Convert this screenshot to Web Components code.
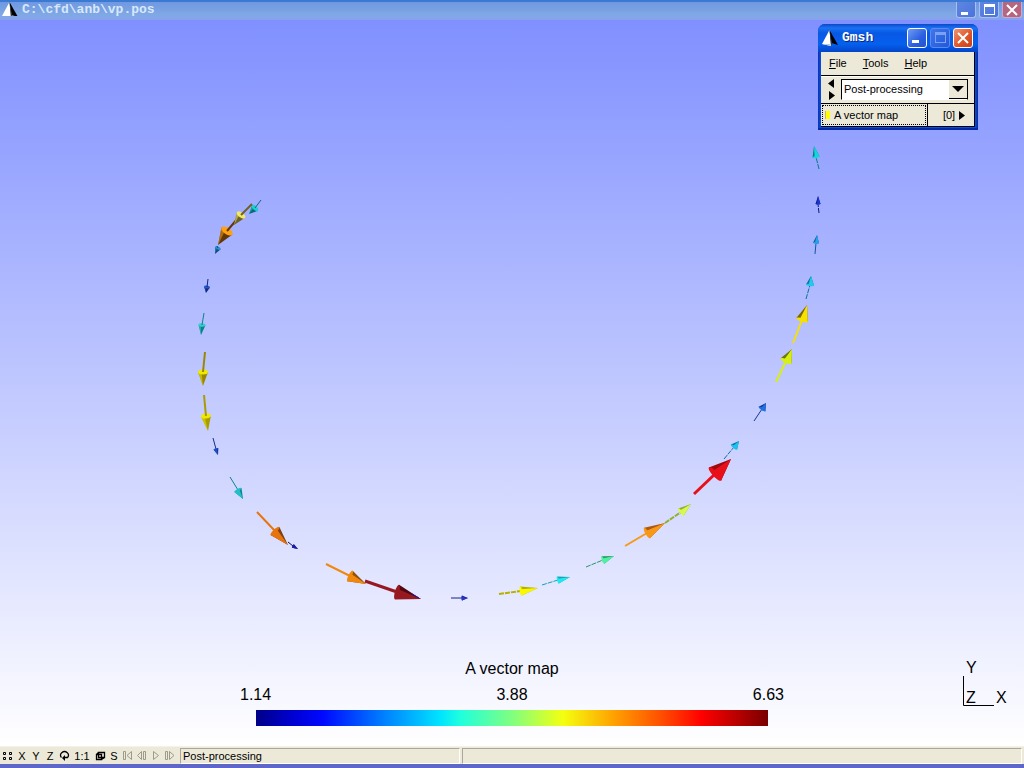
<!DOCTYPE html>
<html lang="en">
<head>
<meta charset="utf-8">
<title>C:\cfd\anb\vp.pos</title>
<style>
  html, body { margin: 0; height: 100%; }
  body { font: 11px/14px "Liberation Sans", Arial, sans-serif; color: #000; }
</style>
</head>
<body>
<gmsh-app></gmsh-app>
<script>
const define = (name, html, setup) => {
  const template = document.createElement('template');
  template.innerHTML = html;
  customElements.define(name, class extends HTMLElement {
    constructor() {
      super();
      this.attachShadow({ mode: 'open' }).append(template.content.cloneNode(true));
    }
    connectedCallback() { if (setup) setup(this, this.shadowRoot); }
  });
};

define('gmsh-logo', `
  <style>:host { display: block; flex: none; } svg { display: block; }</style>
  <svg width="16" height="16" viewBox="0 0 16 16" aria-hidden="true">
    <path d="M7.500 0 L0 14 L9 16 Z" fill="#fff"/>
    <path d="M7.500 0 L9.500 13 L16 15 Z" fill="#000"/>
    <path d="M7.500 0 L9 16 L10 13 Z" fill="#333"/>
    <path d="M0 14 L9 16 L9 14 Z" fill="#c8c8c8"/>
  </svg>`);

define('window-buttons', `
  <style>
    :host { display: flex; gap: 3px; flex: none; --size: 20px; }
    button {
      box-sizing: border-box; width: 20px; height: var(--size); padding: 0;
      border: 1px solid #fff; border-radius: 3px;
      background: linear-gradient(135deg, #6f9bf5, #2a5fe0 60%, #2454cc);
      display: grid; place-items: center;
    }
    svg { display: block; }
    .max { background: linear-gradient(135deg, #3f76ec, #2258da); border-color: #5b8af0; color: #7ba2f2; }
    .min, .close { color: #fff; }
    .close { background: linear-gradient(135deg, #f0936f, #dd5226 60%, #c8401c); }
    :host([faded]) button { border-color: #a9bdf0; border-top: 0; border-radius: 0 0 3px 3px; background: linear-gradient(135deg, #5f86e0, #4a74dc); color: #fff; }
    :host([faded]) .close { background: linear-gradient(135deg, #b06a84, #b8627a); border-color: #c8a8d8; }
  </style>
  <button class="min" aria-label="Minimize"><svg width="14" height="14"><path d="M2 9h7v3h-7z" fill="currentColor"/></svg></button>
  <button class="max" aria-label="Maximize"><svg width="14" height="14"><path d="M2 1h11v11h-11zM3 4v7h9v-7z" fill="currentColor" fill-rule="evenodd"/></svg></button>
  <button class="close" aria-label="Close"><svg width="14" height="14"><path d="M2 2L12 12M12 2L2 12" stroke="currentColor" stroke-width="2"/></svg></button>`);

define('main-title', `
  <style>
    :host {
      display: flex; box-sizing: border-box; height: 20px; padding: 0 2px; gap: 4px;
      border-top: 2px solid #3a7ad2;
      background: linear-gradient(#6f98e2, #7fa8e4 70%, #88a2ee);
    }
    h1 { flex: 1; margin: 0; font: bold 13px/16px "Liberation Mono", "Courier New", monospace; color: #d8e8fa; }
    window-buttons { height: 16px; }
    gmsh-logo { height: 14px; overflow: hidden; }
  </style>
  <gmsh-logo></gmsh-logo>
  <h1>C:\\cfd\\anb\\vp.pos</h1>
  <window-buttons faded style="--size:16px"></window-buttons>`);

define('vector-field', `
  <style>:host { display: block; height: 100%; } svg { display: block; width: 100%; height: 100%; }</style>
  <svg viewBox="0 20 1024 726" role="img" aria-label="Vector map"><g></g></svg>`,
  (host, root) => {
    // tail x,y, cone base x,y, tip x,y, cone width, light colour, dark colour, style
    // style: 1 = dashed shaft, 2 = cone seen from its lit base
    const arrows = [
      [261,200, 255,208, 249,214, 8, '#18d0d0', '#0c6878', 2],
      [238,218, 227,231, 218,245, 13, '#ffa010', '#603808', 2],
      [252,204, 241,215, 234,225, 10, '#f0e868', '#706028', 2],
      [217,246, 218,248, 215,254, 6, '#2890d0', '#104c80', 2],
      [208,279, 207,287, 206,293, 6, '#2858d0', '#102878', 2],
      [204,313, 202,325, 201,335, 7, '#30d0d0', '#108088', 2],
      [205,352, 203,372, 203,386, 10, '#f0e800', '#988800', 2],
      [204,395, 206,416, 208,431, 10, '#f0e800', '#a89c00', 2],
      [213,438, 216,449, 218,455, 5, '#2050c8', '#103090'],
      [230,477, 238,490, 243,499, 8, '#20c0c8', '#108090'],
      [257,512, 275,531, 288,545, 12, '#e87410', '#804010'],
      [288,542, 293,546, 298,549, 4, '#1820b0', '#101070'],
      [326,564, 350,576, 366,584, 12, '#f08810', '#905008'],
      [365,581, 397,592, 421,599, 15, '#981820', '#500810'],
      [451,598, 462,598, 468,598, 5, '#2838c8', '#182088'],
      [499,594, 521,591, 538,588, 9, '#f8f800', '#b8b000', 1],
      [542,585, 558,580, 570,577, 7, '#20e8f0', '#18a0b0', 1],
      [586,567, 603,560, 614,556, 8, '#50f0a0', '#289868', 1],
      [625,546, 647,533, 665,523, 12, '#f89818', '#b05810'],
      [665,523, 681,512, 691,504, 9, '#d8f850', '#90b030', 1],
      [694,494, 715,474, 731,459, 18, '#e81018', '#a00810'],
      [724,459, 734,447, 739,441, 8, '#20c0f0', '#1070a0', 1],
      [754,421, 762,409, 766,403, 8, '#2070e0', '#103898'],
      [776,382, 786,361, 792,349, 12, '#d8f010', '#687810'],
      [793,343, 802,320, 807,305, 12, '#f8e000', '#786800'],
      [806,299, 810,285, 811,276, 8, '#20c8f0', '#107090', 1],
      [815,254, 816,243, 817,235, 6, '#28a0f0', '#105898'],
      [819,213, 818,204, 818,196, 5, '#1838d8', '#101878', 1],
      [819,169, 816,157, 814,146, 7, '#10d8d8', '#087880', 1]
    ];
    root.querySelector('g').innerHTML = arrows.map(([tx, ty, bx, by, px, py, w, light, dark, style]) => {
      const length = Math.hypot(px - bx, py - by);
      const nx = -(py - by) / length * w / 2, ny = (px - bx) / length * w / 2;
      const angle = Math.atan2(py - by, px - bx) * 180 / Math.PI;
      const shaft = w > 14 ? 3 : w > 8 ? 2 : 1;
      const lit = style === 2;
      const shade = w > 11 && !lit ? light : dark;
      const edge = lit ? 0.3 : -0.4;
      const cone = `<path d="M${bx + nx} ${by + ny}L${px} ${py}L${bx - nx} ${by - ny}Z" fill="${dark}"/>
        <path d="M${bx + nx * edge} ${by + ny * edge}L${px} ${py}L${bx + nx} ${by + ny}Z" fill="${light}" opacity="${lit ? 0.5 : 1}"/>
        <ellipse cx="${bx}" cy="${by}" rx="${lit ? w / 4 : w / 7}" ry="${w / 2}" transform="rotate(${angle} ${bx} ${by})" fill="${light}"/>`;
      const line = `<path d="M${tx} ${ty}L${bx} ${by}" stroke="${shade}" stroke-width="${shaft}" ${style === 1 ? 'stroke-dasharray="5 1"' : ''}/>`;
      return lit ? cone + line : line + cone;
    }).join('') + '<path d="M412 594L419 598" stroke="#2018a0" stroke-width="1"/>';
  });

define('color-legend', `
  <style>
    :host { display: block; width: 50%; font-size: 16px; line-height: 18px; }
    figure, figcaption { margin: 0; }
    figcaption { text-align: center; }
    .values { display: grid; grid-template-columns: 1fr 1fr 1fr; margin: 8px -16px 6px; }
    .values span:nth-child(2) { text-align: center; }
    .values span:nth-child(3) { text-align: right; }
    .bar {
      height: 16px;
      background: linear-gradient(90deg, #000088, #0000d0 7%, #0008ff 13%, #0080ff 25%, #00e4ff 36%, #20ffdc 40%,
        #80ff80 50%, #f4ff10 60%, #ffa000 70%, #ff5000 79%, #ff0000 87%, #b80000 94%, #780000);
    }
  </style>
  <figure>
    <figcaption>A vector map</figcaption>
    <div class="values"><span>1.14</span><span>3.88</span><span>6.63</span></div>
    <div class="bar"></div>
  </figure>`);

define('axis-triad', `
  <style>:host { display: block; } svg { display: block; } text { font-size: 16px; }</style>
  <svg width="48" height="50" viewBox="960 658 48 50" role="img" aria-label="Axes">
    <path d="M963.5 676V705.5H994" fill="none" stroke="#000"/>
    <text x="966" y="673">Y</text><text x="966" y="703">Z</text><text x="996" y="703">X</text>
  </svg>`);

define('tool-window', `
  <style>
    :host {
      display: block; box-sizing: border-box; width: 160px; padding: 0 3px 3px;
      border-radius: 7px 7px 0 0;
      background: linear-gradient(90deg, #0831b8, #0b50dc 3px, #0b50dc calc(100% - 3px), #0428a0);
      box-shadow: inset 0 -2px #0428a8;
    }
    header {
      display: flex; align-items: center; box-sizing: border-box; height: 28px; gap: 4px;
      margin: 0 -3px; padding: 0 5px 0 4px; border-radius: 7px 7px 0 0;
      background: linear-gradient(#0a48c8, #1a72f4 4px, #0858e4 9px, #0560ee 20px, #0344c8);
    }
    h2 { flex: 1; margin: 0; font: bold 13px/16px "Liberation Mono", "Courier New", monospace; color: #fff; text-shadow: 1px 1px #0a2a80; }
    .body { background: #ece9d8; border: solid #000; border-width: 0 1px 1px 0; }
  </style>
  <header><gmsh-logo></gmsh-logo><h2><slot name="title"></slot></h2><window-buttons></window-buttons></header>
  <div class="body"><slot></slot></div>`);

define('menu-bar', `
  <style>
    :host { display: flex; box-sizing: border-box; height: 24px; padding: 0 4px 2px; align-items: center; border-bottom: 1px solid #000; }
    button { font: inherit; color: inherit; border: 0; padding: 0; background: none; }
    nav { display: flex; gap: 16px; padding-left: 4px; }
  </style>
  <nav>
    <button><u>F</u>ile</button><button><u>T</u>ools</button><button><u>H</u>elp</button>
  </nav>`);

define('module-picker', `
  <style>
    :host { display: flex; box-sizing: border-box; height: 28px; padding: 0 6px; align-items: center; gap: 6px; border-bottom: 1px solid #000; box-shadow: inset 0 1px #fff; }
    .history { display: grid; gap: 3px; }
    button { display: block; border: 0; padding: 0; background: none; width: 8px; height: 9px; }
    svg { display: block; }
    .combo { flex: 1; display: grid; box-sizing: border-box; height: 21px; border: 1px solid #000; border-bottom-color: #fff; background: #fff; }
    .combo > * { grid-area: 1 / 1; }
    select { appearance: none; font: inherit; color: inherit; border: 0; padding: 0 0 1px 2px; margin: 0; background: none; min-width: 0; outline: 0; }
    .arrow { justify-self: end; display: grid; place-items: center; width: 18px; box-sizing: border-box; background: #ece9d8; border-bottom: 1px solid #000; pointer-events: none; }
  </style>
  <div class="history">
    <button aria-label="Back"><svg width="8" height="9"><path d="M7 0V9L1 4.500Z"/></svg></button>
    <button aria-label="Forward"><svg width="8" height="9"><path d="M2 0V9L8 4.500Z"/></svg></button>
  </div>
  <div class="combo">
    <select aria-label="Module"><option>Post-processing</option></select>
    <span class="arrow"><svg width="12" height="6"><path d="M0 0H12L6 6Z"/></svg></span>
  </div>`);

define('view-row', `
  <style>
    :host { display: flex; height: 22px; }
    label { flex: 1; display: flex; align-items: center; gap: 4px; margin: 1px; padding-left: 2px; border: 1px dotted #000; }
    input { appearance: none; width: 5px; height: 8px; margin: 0; background: #ff0; border-left: 1px solid #c8b860; }
    button { width: 47px; font: inherit; color: inherit; border: 0; border-left: 1px solid #000; padding: 0 0 0 6px; background: none; display: flex; align-items: center; justify-content: center; gap: 4px; }
  </style>
  <label><input type="checkbox" checked><slot></slot></label>
  <button><span>[0]</span><svg width="6" height="9" aria-hidden="true"><path d="M0 0V9L6 4.500Z"/></svg></button>`);

define('status-bar', `
  <style>
    :host {
      display: flex; box-sizing: border-box; height: 22px; padding: 0 2px 0 1px; background: #ece9d8;
      border-bottom: 4px solid #5e66c8; border-top: 1px solid #f4f2e8;
    }
    button { width: 14px; padding: 0; border: 0; background: none; font: inherit; color: #000; display: grid; place-items: center; flex: none; }
    .wide { width: 22px; }
    .off { color: #9c9a8c; }
    svg { display: block; fill: none; stroke: currentColor; }
    .fields { flex: 1; display: grid; grid-template-columns: 1fr 2fr; gap: 2px; margin: 1px 0 0 3px; }
    output { box-sizing: border-box; padding-left: 2px; border: 1px solid #aca899; border-right-color: #fff; border-bottom-color: #fff; line-height: 14px; }
  </style>
  <button aria-label="Options"><svg width="12" height="10"><path d="M1.500 1.500h2v2h-2zM7.500 1.500h2v2h-2zM1.500 6.500h2v2h-2zM7.500 6.500h2v2h-2z"/></svg></button>
  <button>X</button><button>Y</button><button>Z</button>
  <button aria-label="Rotate"><svg width="11" height="11"><path d="M2.500 7.500A4 3.500 0 1 1 8.500 7.500H5" stroke-width="1.300"/><path d="M6 5v6L3 8z" fill="currentColor" stroke="none"/></svg></button>
  <button class="wide">1:1</button>
  <button aria-label="Perspective"><svg width="11" height="10"><path d="M1.500 3.500h5v5h-5zM3.500 1.500h6v5h-6zM1.500 3.500l2-2M6.500 8.500l3-2" stroke-width="1.300"/></svg></button>
  <button>S</button>
  <button class="off" aria-label="First step"><svg width="10" height="9"><path d="M.5.500h2v8h-2zM8.500.500v8L4 4.500z"/></svg></button>
  <button class="off" aria-label="Previous step"><svg width="10" height="9"><path d="M4.500.500v8L.5 4.500zM6.500.500h2v8h-2z"/></svg></button>
  <button class="off" aria-label="Play"><svg width="7" height="9"><path d="M.5.500v8L5.500 4.500z"/></svg></button>
  <button class="off" aria-label="Next step"><svg width="10" height="9"><path d="M.5.500h2v8h-2zM4.500.500v8L9 4.500z"/></svg></button>
  <div class="fields"><output>Post-processing</output><output></output></div>`);

define('gmsh-app', `
  <style>
    :host { display: flex; flex-direction: column; min-height: 100vh; }
    main { position: relative; flex: 1; min-height: 0; background: linear-gradient(#8090ff, #fff); }
    vector-field { position: absolute; inset: 0; }
    color-legend { position: absolute; left: 25%; bottom: 20px; }
    axis-triad { position: absolute; right: 16px; bottom: 38px; }
    tool-window { position: absolute; top: 4px; right: 46px; }
  </style>
  <main-title></main-title>
  <main>
    <vector-field></vector-field>
    <color-legend></color-legend>
    <axis-triad></axis-triad>
    <tool-window>
      <span slot="title">Gmsh</span>
      <menu-bar></menu-bar>
      <module-picker></module-picker>
      <view-row>A vector map</view-row>
    </tool-window>
  </main>
  <status-bar></status-bar>`);
</script>
</body>
</html>
